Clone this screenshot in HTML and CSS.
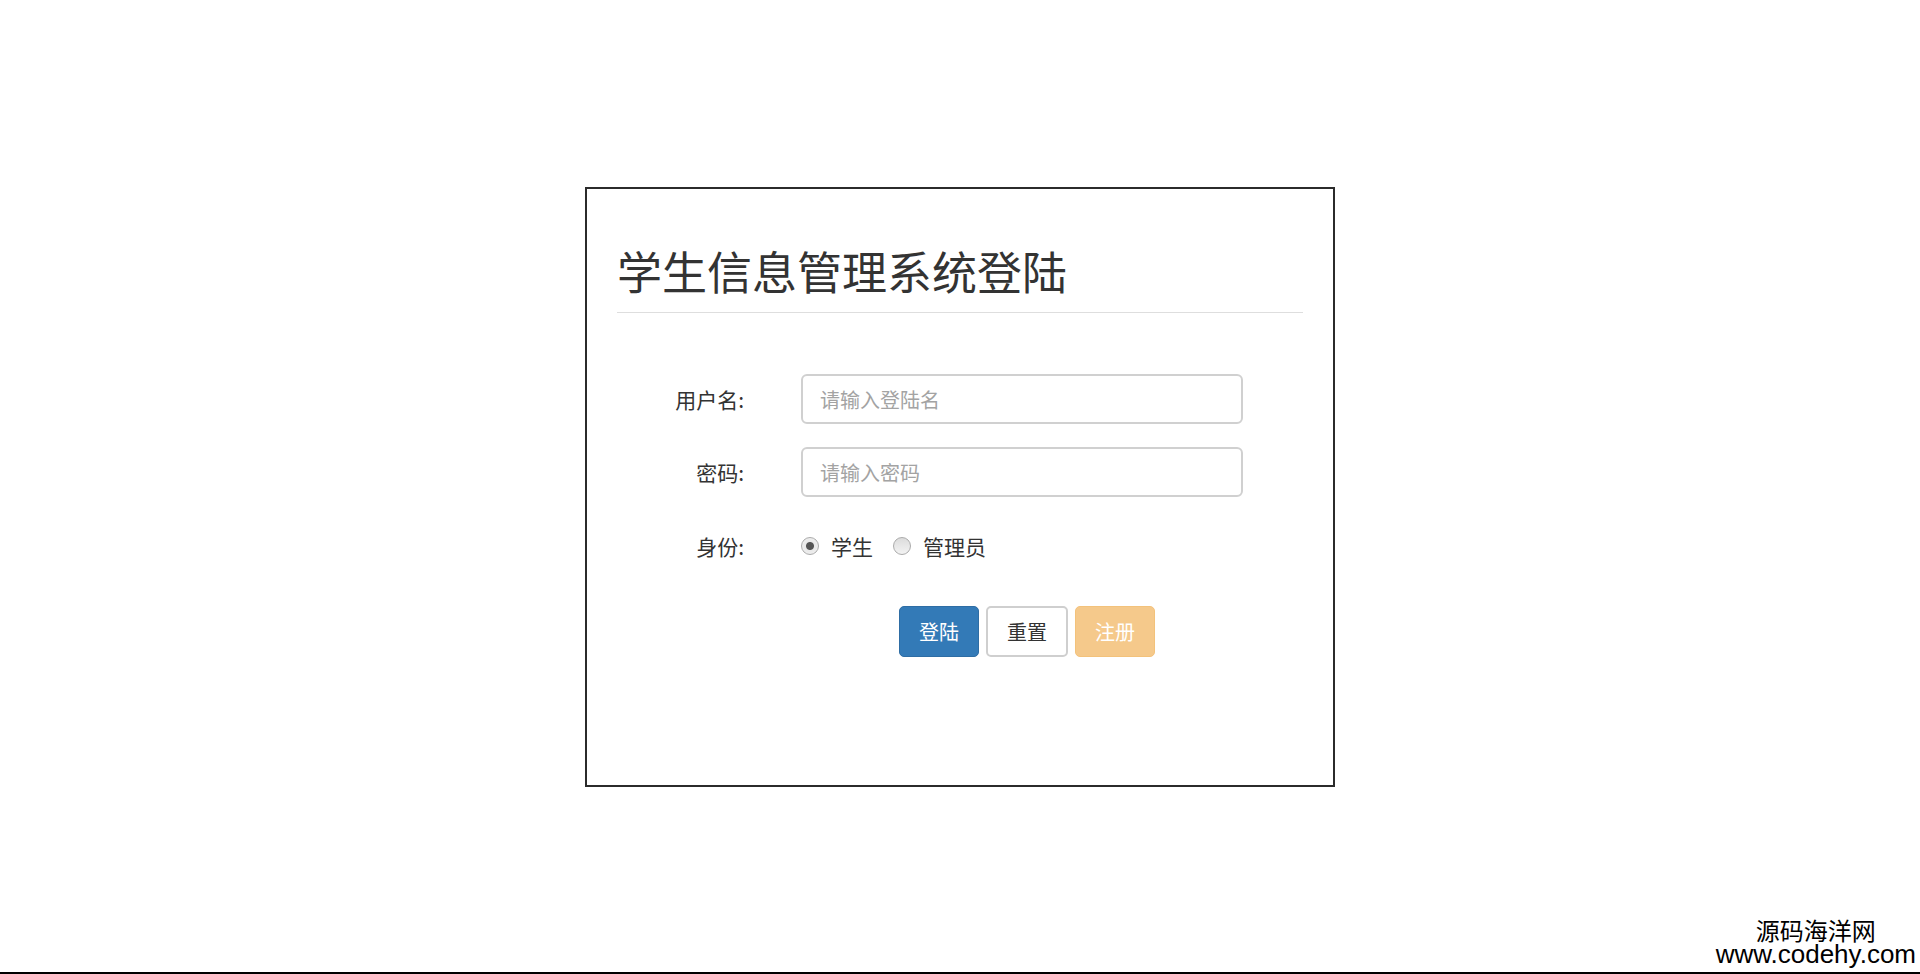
FILE: index.html
```html
<!DOCTYPE html>
<html lang="zh-CN">
<head>
    <meta charset="UTF-8">
    <meta name="viewport" content="width=device-width, initial-scale=1.0">
    <title>学生信息管理系统登陆</title>
    <link rel="stylesheet" href="styles.css">
</head>
<body>
    <div class="login-box">
        <div class="page-header">
            <h1>学生信息管理系统登陆</h1>
        </div>
        <form class="login-form" onsubmit="return false;">
            <div class="form-row">
                <label class="form-label" for="userName">用户名:</label>
                <input class="form-input" type="text" id="userName" placeholder="请输入登陆名">
            </div>
            <div class="form-row">
                <label class="form-label" for="password">密码:</label>
                <input class="form-input" type="password" id="password" placeholder="请输入密码">
            </div>
            <div class="form-row role-row">
                <span class="form-label">身份:</span>
                <label class="radio"><input type="radio" name="role" value="student" checked>学生</label>
                <label class="radio"><input type="radio" name="role" value="admin">管理员</label>
            </div>
            <div class="btn-row">
                <button class="btn btn-primary" type="submit">登陆</button>
                <button class="btn btn-default" type="reset">重置</button>
                <button class="btn btn-warning" type="button" disabled>注册</button>
            </div>
        </form>
    </div>

    <div class="watermark">
        <div class="watermark-cn">源码海洋网</div>
        <div class="watermark-url">www.codehy.com</div>
    </div>
    <div class="bottom-line"></div>
</body>
</html>
```

FILE: styles.css
```css
body {
    margin: 0;
    height: 974px;
    overflow: hidden;
    background-color: #fff;
    color: #333;
    font-family: "Noto Sans CJK SC", "Liberation Sans", sans-serif;
    font-size: 20px;
}

.login-box {
    box-sizing: border-box;
    width: 750px;
    height: 600px;
    margin: 187px auto 0;
    border: 2px solid #2b2b2b;
}

.page-header {
    margin: 0 30px;
    padding: 57px 0 16px;
    border-bottom: 1px solid #dedede;
}

.page-header h1 {
    margin: 0;
    font-size: 45px;
    font-weight: 400;
    line-height: 50px;
    color: #333;
}

.login-form {
    padding-top: 61px;
}

.form-row {
    display: flex;
    align-items: center;
    height: 50px;
    margin-bottom: 23px;
}

.form-label {
    width: 157px;
    margin-right: 57px;
    text-align: right;
    font-size: 21px;
    color: #333;
}

.form-input {
    box-sizing: border-box;
    width: 442px;
    height: 50px;
    padding: 0 17px;
    border: 2px solid #d0d0d0;
    border-radius: 6px;
    font-family: inherit;
    font-size: 20px;
    color: #555;
    outline: none;
}

.form-input::placeholder {
    color: #a3a3a3;
}

.role-row {
    margin-top: 24px;
    margin-bottom: 35px;
}

.radio {
    display: flex;
    align-items: center;
    gap: 12px;
    margin-right: 20px;
    font-size: 21px;
}

.radio input {
    appearance: none;
    -webkit-appearance: none;
    width: 18px;
    height: 18px;
    margin: 0;
    border: 1px solid #ababab;
    border-radius: 50%;
    background: linear-gradient(#dcdcdc, #f3f3f3);
}

.radio input:checked {
    background: radial-gradient(circle, #555 0, #555 3.5px, #e9e9e9 4.5px, #f2f2f2 100%);
}

.btn-row {
    display: flex;
    gap: 7px;
    padding-left: 312px;
}

.btn {
    box-sizing: border-box;
    height: 51px;
    padding: 0 19px;
    border: 1px solid transparent;
    border-radius: 5px;
    font-family: inherit;
    font-size: 20px;
    cursor: pointer;
}

.btn-primary {
    background-color: #337ab7;
    border-color: #2e6da4;
    color: #fff;
}

.btn-default {
    background-color: #fff;
    border: 2px solid #cfcfcf;
    color: #333;
}

.btn-warning {
    background-color: #f0ad4e;
    border-color: #eea236;
    color: #fff;
    opacity: .65;
    cursor: not-allowed;
}

.watermark {
    position: absolute;
    right: 4px;
    bottom: 8px;
    text-align: center;
    color: #000;
}

.watermark-cn {
    font-size: 24px;
    line-height: 25px;
}

.watermark-url {
    font-family: "Liberation Sans", sans-serif;
    font-size: 26px;
    line-height: 24px;
}

.bottom-line {
    position: absolute;
    left: 0;
    right: 0;
    bottom: 0;
    height: 2px;
    background-color: #000;
}
```
